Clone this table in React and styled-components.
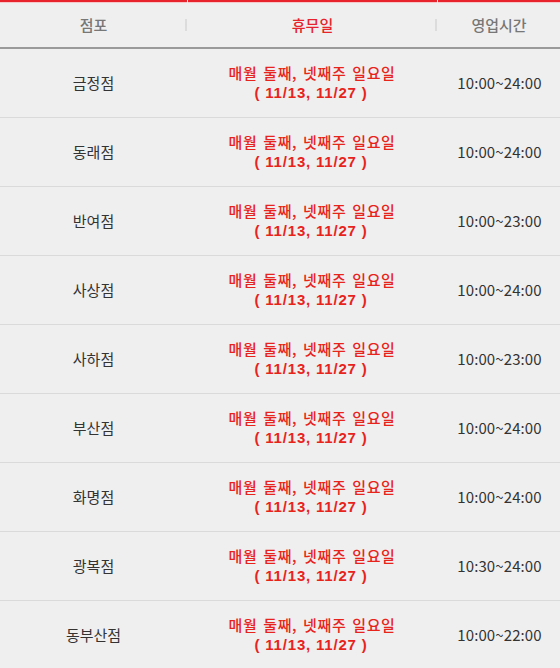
import React from "react";
import styled, { createGlobalStyle } from "styled-components";

const Global = createGlobalStyle`
  html, body { margin: 0; padding: 0; background: #efefef; }
  body { font-family: "Noto Sans CJK KR", "Noto Sans", sans-serif; }
`;

const Table = styled.div`
  width: 560px;
  background: #efefef;
`;

const HeadRow = styled.div`
  display: grid;
  grid-template-columns: 187px 250px 123px;
  border-bottom: 2px solid #9a9a9a;
`;

const HeadCell = styled.div`
  position: relative;
  box-sizing: border-box;
  height: 47px;
  border-top: 2px solid #e8232b;
  box-shadow: inset 0 1px 0 #f6c8ca;
  margin-left: ${(p) => (p.$first ? "0" : "1px")};
  display: flex;
  align-items: center;
  justify-content: center;
  font-size: 15px;
  font-weight: 500;
  color: ${(p) => (p.$accent ? "#e8232b" : "#777")};
  padding-bottom: 1px;
`;

const Divider = styled.span`
  position: absolute;
  right: 0;
  top: 17px;
  width: 2px;
  height: 12px;
  background: #dcdcdc;
`;

const Row = styled.div`
  display: grid;
  grid-template-columns: 187px 250px 123px;
  height: 68px;
  border-bottom: 1px solid #dadada;
`;

const Cell = styled.div`
  display: flex;
  flex-direction: column;
  align-items: center;
  justify-content: center;
  font-size: 15px;
  color: #333;
  line-height: 20px;
`;

const Closed = styled(Cell)`
  color: #e8231c;
`;

const ClosedMain = styled.span`
  font-weight: 500;
  letter-spacing: 0.6px;
  word-spacing: 2px;
`;

const ClosedDates = styled.span`
  font-family: "Liberation Sans", Arial, sans-serif;
  font-weight: bold;
  font-size: 15px;
  letter-spacing: 0.8px;
  margin-left: -2px;
`;

const Hours = styled(Cell)`
  padding-left: 2px;
  letter-spacing: 0.1px;
`;

const stores = [
  ["금정점", "10:00~24:00"],
  ["동래점", "10:00~24:00"],
  ["반여점", "10:00~23:00"],
  ["사상점", "10:00~24:00"],
  ["사하점", "10:00~23:00"],
  ["부산점", "10:00~24:00"],
  ["화명점", "10:00~24:00"],
  ["광복점", "10:30~24:00"],
  ["동부산점", "10:00~22:00"],
];

export default function App() {
  return (
    <>
      <Global />
      <Table>
        <HeadRow>
          <HeadCell $first>
            점포
            <Divider />
          </HeadCell>
          <HeadCell $accent>
            휴무일
            <Divider />
          </HeadCell>
          <HeadCell>영업시간</HeadCell>
        </HeadRow>
        {stores.map(([name, hours]) => (
          <Row key={name}>
            <Cell>{name}</Cell>
            <Closed>
              <ClosedMain>매월 둘째, 넷째주 일요일</ClosedMain>
              <ClosedDates>( 11/13, 11/27 )</ClosedDates>
            </Closed>
            <Hours>{hours}</Hours>
          </Row>
        ))}
      </Table>
    </>
  );
}
